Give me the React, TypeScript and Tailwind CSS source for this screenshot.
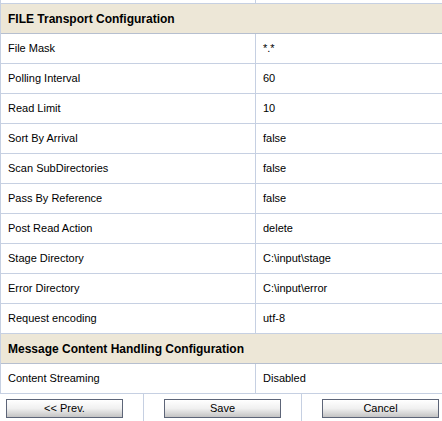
const rows: [string, string][] = [
  ["File Mask", "*.*"],
  ["Polling Interval", "60"],
  ["Read Limit", "10"],
  ["Sort By Arrival", "false"],
  ["Scan SubDirectories", "false"],
  ["Pass By Reference", "false"],
  ["Post Read Action", "delete"],
  ["Stage Directory", "C:\\input\\stage"],
  ["Error Directory", "C:\\input\\error"],
  ["Request encoding", "utf-8"],
];

function Row({ label, value }: { label: string; value: string }) {
  return (
    <div className="grid h-[30px] grid-cols-[255px_1fr] border-b border-[#c6d0e2]">
      <div className="flex items-center border-r border-[#c6d0e2] pl-[7px]">{label}</div>
      <div className="flex items-center pl-[7px]">{value}</div>
    </div>
  );
}

function Section({ title }: { title: string }) {
  return (
    <div className="flex h-[30px] items-center border-b border-[#b6bfcf] bg-[#ede7d7] pl-[7px] text-[12px] font-bold">
      {title}
    </div>
  );
}

function FormButton({ label }: { label: string }) {
  return (
    <button
      type="button"
      className="h-[19px] w-[117px] border border-[#5d6578] bg-gradient-to-b from-white via-[#f0f0f0] to-[#c4c4c4] text-[11px] leading-none text-black"
    >
      {label}
    </button>
  );
}

export default function App() {
  return (
    <div className="h-[421px] w-[442px] overflow-hidden bg-white font-['Liberation_Sans',Arial,sans-serif] text-[11px] text-black">
      <div className="border-l border-[#c6d0e2]">
        <div className="grid h-[4px] grid-cols-[255px_1fr] border-b border-[#c6d0e2]">
          <div className="border-r border-[#c6d0e2]" />
          <div />
        </div>
        <Section title="FILE Transport Configuration" />
        {rows.map(([label, value]) => (
          <Row key={label} label={label} value={value} />
        ))}
        <Section title="Message Content Handling Configuration" />
        <Row label="Content Streaming" value="Disabled" />
      </div>
      <div className="flex h-[28px] items-center pl-[6px]">
        <FormButton label="<< Prev." />
        <div className="mx-[20px] h-full w-px bg-[#c6d0e2]" />
        <FormButton label="Save" />
        <div className="mx-[20px] h-full w-px bg-[#c6d0e2]" />
        <FormButton label="Cancel" />
      </div>
    </div>
  );
}
